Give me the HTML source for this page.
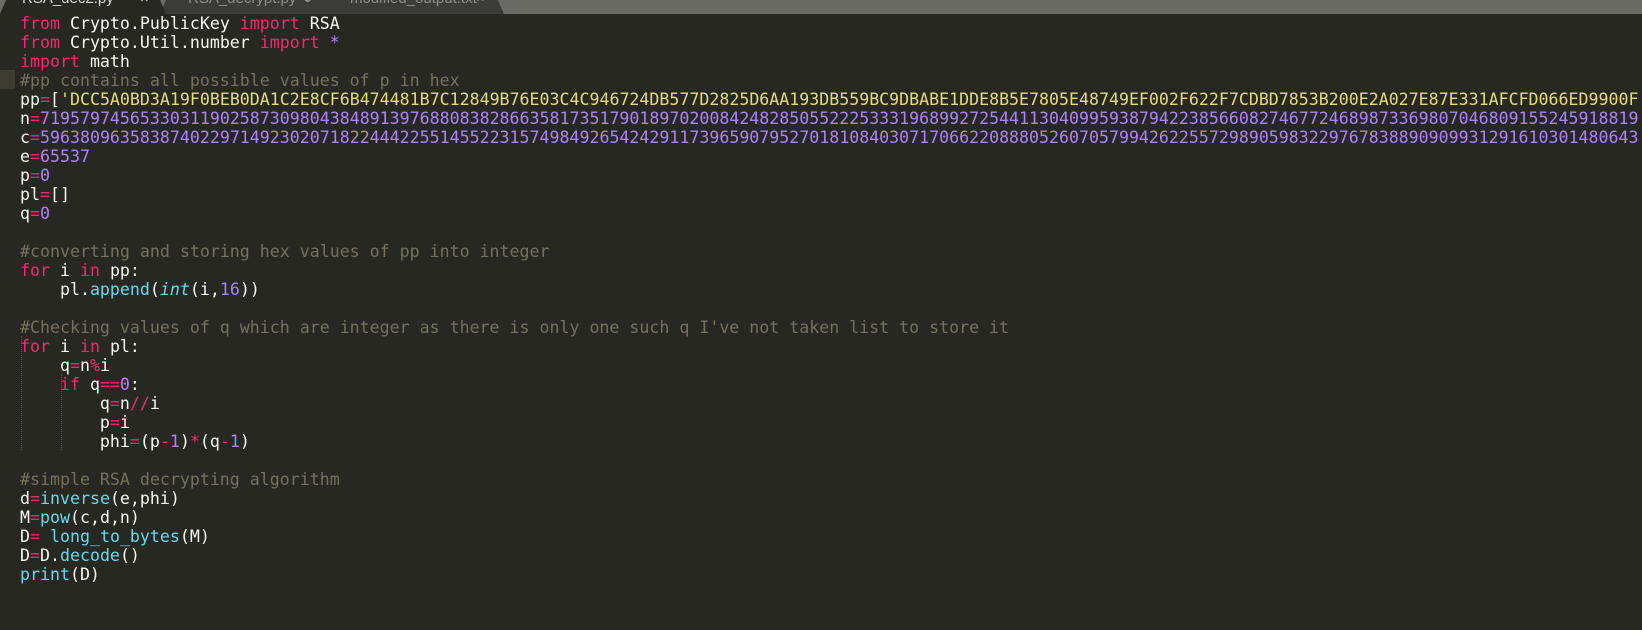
<!DOCTYPE html>
<html><head><meta charset="utf-8"><style>
html,body{margin:0;padding:0;width:1642px;height:630px;overflow:hidden;background:#272822;}
.bar{position:absolute;left:0;top:0;width:1642px;height:14px;background:#6b6b66;overflow:hidden;}
.tab{position:absolute;top:0;height:14px;font:15px "Liberation Sans","DejaVu Sans",sans-serif;overflow:hidden;}
.tab span{position:absolute;top:-10px;white-space:nowrap;}
.code{position:absolute;left:20px;top:13.5px;font-family:"DejaVu Sans Mono","Liberation Mono",monospace;font-size:16.6px;line-height:19px;color:#f8f8f2;white-space:pre;}
.k{color:#f92672}.c{color:#75715e}.s{color:#e6db74}.n{color:#ae81ff}.f{color:#66d9ef}.i{color:#66d9ef;font-style:italic}
.g{position:absolute;width:0;border-left:1px dotted #55554d;}
</style></head><body>
<div class="bar">
  <div class="tab" style="left:318px;width:186px;background:#3b3b37;clip-path:polygon(6px 0,180px 0,186px 14px,0 14px);"><span style="left:32px;color:#8f8f8a">modified_output.txt</span><span style="left:158px;color:#8f8f8a">×</span></div>
  <div class="tab" style="left:160px;width:170px;background:#3b3b37;clip-path:polygon(6px 0,164px 0,170px 14px,0 14px);"><span style="left:28px;color:#8f8f8a">RSA_decrypt.py</span><span style="left:143px;color:#8f8f8a">●</span></div>
  <div class="tab" style="left:0;width:166px;background:#272822;clip-path:polygon(6px 0,160px 0,166px 14px,0 14px);"><span style="left:22px;color:#d8d8d2">RSA_dec2.py</span><span style="left:140px;color:#d8d8d2">×</span></div>
</div>
<div style="position:absolute;left:0;top:70px;width:15px;height:19px;background:#3e3d32"></div>
<div class="g" style="left:21px;top:336px;height:114px"></div>
<div class="g" style="left:61px;top:374px;height:76px"></div>
<div class="code"><span class="k">from</span> Crypto.PublicKey <span class="k">import</span> RSA
<span class="k">from</span> Crypto.Util.number <span class="k">import</span> <span class="n">*</span>
<span class="k">import</span> math
<span class="c">#pp contains all possible values of p in hex</span>
pp<span class="k">=</span>[<span class="s">'DCC5A0BD3A19F0BEB0DA1C2E8CF6B474481B7C12849B76E03C4C946724DB577D2825D6AA193DB559BC9DBABE1DDE8B5E7805E48749EF002F622F7CDBD7853B200E2A027E87E331AFCFD066ED9900F</span>
n<span class="k">=</span><span class="n">7195797456533031190258730980438489139768808382866358173517901897020084248285055222533319689927254411304099593879422385660827467724689873369807046809155245918819</span>
c<span class="k">=</span><span class="n">5963809635838740229714923020718224442255145522315749849265424291173965907952701810840307170662208880526070579942622557298905983229767838890909931291610301480643</span>
e<span class="k">=</span><span class="n">65537</span>
p<span class="k">=</span><span class="n">0</span>
pl<span class="k">=</span>[]
q<span class="k">=</span><span class="n">0</span>

<span class="c">#converting and storing hex values of pp into integer</span>
<span class="k">for</span> i <span class="k">in</span> pp:
    pl.<span class="f">append</span>(<span class="i">int</span>(i,<span class="n">16</span>))

<span class="c">#Checking values of q which are integer as there is only one such q I've not taken list to store it</span>
<span class="k">for</span> i <span class="k">in</span> pl:
    q<span class="k">=</span>n<span class="k">%</span>i
    <span class="k">if</span> q<span class="k">==</span><span class="n">0</span>:
        q<span class="k">=</span>n<span class="k">//</span>i
        p<span class="k">=</span>i
        phi<span class="k">=</span>(p<span class="k">-</span><span class="n">1</span>)<span class="k">*</span>(q<span class="k">-</span><span class="n">1</span>)

<span class="c">#simple RSA decrypting algorithm</span>
d<span class="k">=</span><span class="f">inverse</span>(e,phi)
M<span class="k">=</span><span class="f">pow</span>(c,d,n)
D<span class="k">=</span> <span class="f">long_to_bytes</span>(M)
D<span class="k">=</span>D.<span class="f">decode</span>()
<span class="f">print</span>(D)</div>
</body></html>
